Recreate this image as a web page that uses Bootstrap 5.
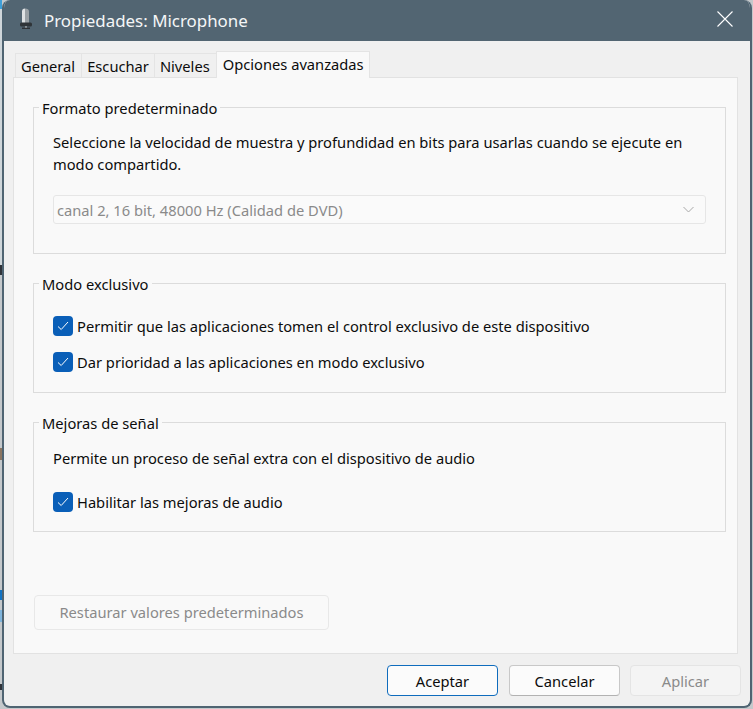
<!DOCTYPE html>
<html lang="es">
<head>
<meta charset="utf-8">
<title>Propiedades: Microphone</title>
<link href="https://cdn.jsdelivr.net/npm/bootstrap@5.3.0/dist/css/bootstrap.min.css" rel="stylesheet">
<style>
html,body{height:709px;overflow:hidden}
body{background-color:#c4c8cb;background-image:linear-gradient(#3f9fd8 0,#3f9fd8 9px,#cfd6da 9px,#cfd6da 265px,#30343a 265px,#30343a 275px,#c4c8cb 275px,#c4c8cb 448px,#8a7460 448px,#8a7460 460px,#c4c8cb 460px,#c4c8cb 590px,#1173c4 590px,#1173c4 600px,#c4c8cb 600px,#c4c8cb 610px,#7fb4dc 610px,#7fb4dc 622px,#c4c8cb 622px,#c4c8cb 684px,#30343a 684px,#30343a 690px,#c4c8cb 690px);background-size:2px 100%;background-repeat:no-repeat;padding:0 1px 0 2px;font-family:"Noto Sans","Liberation Sans",sans-serif;font-size:14.7px;color:#0c0c0c;line-height:20px}
.dlg{width:750px;height:708px;background:#f0f0f0;border:2px solid #4f6472;border-top:0;border-radius:8px;overflow:hidden}
.ttl{height:41px;background:#526572;color:#f4f6f7;font-size:16.9px;padding:0 0 4px 15px;gap:11px;flex:none}
.ttl-t{margin-top:4px}
.ttl-x{margin-left:auto;margin-right:17px;line-height:0}
.tabs{height:36px;padding:12px 0 0 11px;margin:0;list-style:none;flex:none;align-items:flex-start}
.tb{height:24px;background:#f0f0f0;border:1px solid #e4e4e4;border-bottom:0;padding:0 5px;line-height:25px;margin-right:-1px}
.tb:first-child,.tb:nth-child(3){padding-right:6px}
.tb.on{margin-top:-2px;height:27px;background:#f9f9f9;padding:0 5px 0 6px;position:relative;z-index:1}
.pane{height:577px;margin-left:9px;width:725px;background:#f9f9f9;border:1px solid #e2e2e2;padding:29px 11px 0 19px;flex:none}
.grp{border:1px solid #dcdcdc;margin-bottom:29px;position:relative;padding:0 19px}
.grp-a{height:147px;padding-top:23px}
.grp-b{height:110px;padding-top:32px}
.grp-c{height:110px;padding-top:25px}
.grp-t{position:absolute;left:5px;top:-10px;background:#f9f9f9;padding:0 3px;line-height:20px}
.par{line-height:22px}
.sel{height:29px;border:1px solid #e6e6e6;border-radius:3px;background:#fafafa;margin-top:20px;padding:0 11px 0 3px;color:#8a8a8a}
.ck{width:20px;height:20px;background:#0a5fb8;border-radius:4px;flex:none;line-height:0}
.ln{gap:4px;height:20px}
.gap1{margin-top:16px}
.gap2{margin-top:24px}
.rst.btn,.rst.btn:disabled{display:block;width:295px;height:35px;margin:63px 0 0 1px;border:1px solid #e8e8e8;border-radius:4px;background:#f9f9f9;color:#8a8a8a;padding:0;opacity:1;font-size:14.7px}
.foot{gap:11px;padding:11px 0 0 0;margin-left:383px}
.bt.btn{width:111px;height:31px;border:1px solid #c8c8c8;border-bottom-color:#b2b2b2;border-radius:4px;background:#fbfbfb;color:#0c0c0c;padding:0;font-size:14.7px;line-height:20px}
.bt.btn.bt-p{border-color:#0f6cbd}
.bt.btn.bt-d,.bt.btn.bt-d:disabled{color:#8a8a8a;border-color:#e4e4e4;background:#f4f4f4;opacity:1;margin-left:-1px}
</style>
</head>
<body>
<div class="dlg d-flex flex-column">
  <div class="ttl d-flex align-items-center">
    <svg width="14" height="21" viewBox="0 0 14 21"><path d="M3 3.500a3 3 0 0 1 3-3h0v15H3z" fill="#dfe2e4"/><path d="M6 .5a4 3 0 0 1 4 3v12H6z" fill="#9aa1a6"/><rect x="1" y="14.500" width="12" height="4" rx="1.500" fill="#2f3438"/><rect x="6" y="18.500" width="2" height="1.500" fill="#c9cdd0"/><rect x="3" y="19.500" width="8" height="1.500" fill="#2e3236"/></svg>
    <span class="ttl-t">Propiedades: Microphone</span>
    <span class="ttl-x"><svg width="16" height="16" viewBox="0 0 16 16"><path d="M.5.5l15 15M15.500.5l-15 15" stroke="#fff" stroke-width="1.100" fill="none"/></svg></span>
  </div>
  <ul class="tabs d-flex">
    <li class="tb">General</li>
    <li class="tb">Escuchar</li>
    <li class="tb">Niveles</li>
    <li class="tb on">Opciones avanzadas</li>
  </ul>
  <div class="pane">
    <div class="grp grp-a">
      <div class="grp-t">Formato predeterminado</div>
      <div class="par">Seleccione la velocidad de muestra y profundidad en bits para usarlas cuando se ejecute en<br>modo compartido.</div>
      <div class="sel d-flex align-items-center justify-content-between">
        <span>canal 2, 16 bit, 48000 Hz (Calidad de DVD)</span>
        <svg width="11" height="7" viewBox="0 0 11 7"><path d="M.5 1l5 5 5-5" stroke="#a8a8a8" fill="none"/></svg>
      </div>
    </div>
    <div class="grp grp-b">
      <div class="grp-t">Modo exclusivo</div>
      <div class="ln d-flex align-items-center">
        <span class="ck d-flex align-items-center justify-content-center"><svg width="12" height="10" viewBox="0 0 12 10"><path d="M1 5.500l3.200 3L11 1" stroke="#fff" fill="none"/></svg></span>
        <span>Permitir que las aplicaciones tomen el control exclusivo de este dispositivo</span>
      </div>
      <div class="ln gap1 d-flex align-items-center">
        <span class="ck d-flex align-items-center justify-content-center"><svg width="12" height="10" viewBox="0 0 12 10"><path d="M1 5.500l3.200 3L11 1" stroke="#fff" fill="none"/></svg></span>
        <span>Dar prioridad a las aplicaciones en modo exclusivo</span>
      </div>
    </div>
    <div class="grp grp-c">
      <div class="grp-t">Mejoras de señal</div>
      <div>Permite un proceso de señal extra con el dispositivo de audio</div>
      <div class="ln gap2 d-flex align-items-center">
        <span class="ck d-flex align-items-center justify-content-center"><svg width="12" height="10" viewBox="0 0 12 10"><path d="M1 5.500l3.200 3L11 1" stroke="#fff" fill="none"/></svg></span>
        <span>Habilitar las mejoras de audio</span>
      </div>
    </div>
    <button class="rst btn" disabled>Restaurar valores predeterminados</button>
  </div>
  <div class="foot d-flex">
    <button class="bt bt-p btn">Aceptar</button>
    <button class="bt btn">Cancelar</button>
    <button class="bt bt-d btn" disabled>Aplicar</button>
  </div>
</div>
<script src="https://cdn.jsdelivr.net/npm/bootstrap@5.3.0/dist/js/bootstrap.bundle.min.js"></script>
</body>
</html>
